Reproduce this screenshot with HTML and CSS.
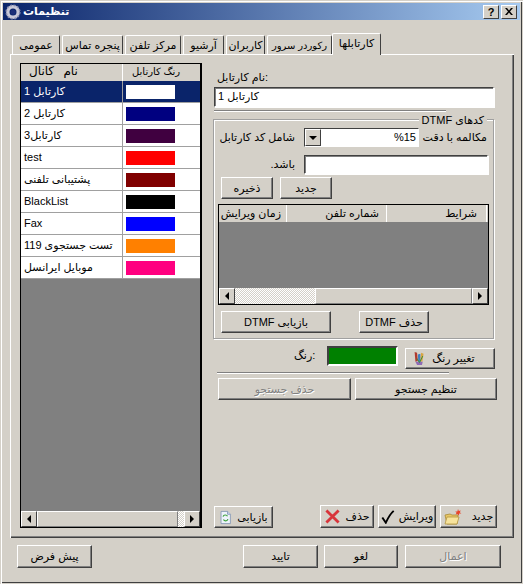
FILE: index.html
```html
<!DOCTYPE html>
<html lang="fa">
<head>
<meta charset="utf-8">
<title>تنظیمات</title>
<link rel="stylesheet" href="styles.css">
</head>
<body>
<div class="window">
  <div class="titlebar">
    <svg class="gear" viewBox="0 0 16 16" width="16" height="16"><circle cx="8" cy="8" r="5.2" fill="none" stroke="#c9c9d8" stroke-width="3.4"/><circle cx="8" cy="8" r="6.8" fill="none" stroke="#8a8fb0" stroke-width="1.6" stroke-dasharray="2 1.6"/><circle cx="8" cy="8" r="2.6" fill="#1c2f78"/></svg>
    <span class="title" dir="rtl">تنظیمات</span>
    <span class="capbtn help">?</span>
    <span class="capbtn close"><svg viewBox="0 0 8 7" width="8" height="7"><path d="M0 0h2l2 2.4L6 0h2L5 3.5 8 7H6L4 4.6 2 7H0l3-3.5z" fill="#000"/></svg></span>
  </div>

  <div class="tabs">
    <div class="tab t1" dir="rtl">عمومی</div>
    <div class="tab t2" dir="rtl">پنجره تماس</div>
    <div class="tab t3" dir="rtl">مرکز تلفن</div>
    <div class="tab t4" dir="rtl">آرشیو</div>
    <div class="tab t5" dir="rtl">کاربران</div>
    <div class="tab t6" dir="rtl">رکوردر سرور</div>
    <div class="tab active t7" dir="rtl">کارتابلها</div>
  </div>

  <div class="panel">
    <div class="list">
      <div class="list-head">
        <div class="lh-name" dir="rtl">نام کانال</div>
        <div class="lh-color" dir="rtl">رنگ کارتابل</div>
      </div>
      <div class="row selected"><div class="name" dir="rtl">کارتابل 1</div><div class="cell"><span class="sw c-white"></span></div></div>
      <div class="row"><div class="name" dir="rtl">کارتابل 2</div><div class="cell"><span class="sw c-navy"></span></div></div>
      <div class="row"><div class="name" dir="rtl">کارتابل3</div><div class="cell"><span class="sw c-purple"></span></div></div>
      <div class="row"><div class="name">test</div><div class="cell"><span class="sw c-red"></span></div></div>
      <div class="row"><div class="name" dir="rtl">پشتیبانی تلفنی</div><div class="cell"><span class="sw c-maroon"></span></div></div>
      <div class="row"><div class="name">BlackList</div><div class="cell"><span class="sw c-black"></span></div></div>
      <div class="row"><div class="name">Fax</div><div class="cell"><span class="sw c-blue"></span></div></div>
      <div class="row"><div class="name" dir="rtl">تست جستجوی 119</div><div class="cell"><span class="sw c-orange"></span></div></div>
      <div class="row"><div class="name" dir="rtl">موبایل ایرانسل</div><div class="cell"><span class="sw c-pink"></span></div></div>
      <div class="list-fill"></div>
      <div class="hscroll">
        <span class="sbtn"><i class="arrow left"></i></span>
        <span class="thumb wide"></span>
        <span class="track tiny"></span>
        <span class="sbtn"><i class="arrow right"></i></span>
      </div>
    </div>

    <div class="side">
      <div class="field-label">نام کارتابل:</div>
      <div class="input name-input" dir="rtl">کارتابل 1</div>
      <div class="rule first-rule"></div>

      <div class="group">
        <div class="legend" dir="rtl">کدهای DTMF</div>
        <div class="g-row r1">
          <span class="lbl l-code" dir="rtl">شامل کد کارتابل</span>
          <div class="combo">
            <span class="combo-btn"><i class="arrow down"></i></span>
            <span class="combo-val">%15</span>
          </div>
          <span class="lbl l-acc" dir="rtl">مکالمه با دقت</span>
        </div>
        <div class="g-row r2">
          <span class="lbl l-be" dir="rtl">باشد.</span>
          <div class="input be-input"></div>
        </div>
        <div class="g-row r3">
          <button class="btn b-save" dir="rtl">ذخیره</button>
          <button class="btn b-new" dir="rtl">جدید</button>
        </div>
        <div class="dtmf-table">
          <div class="dt-head">
            <div class="dh c1" dir="rtl">زمان ویرایش</div>
            <div class="dh c2" dir="rtl">شماره تلفن</div>
            <div class="dh c3" dir="rtl">شرایط</div>
          </div>
          <div class="dt-fill"></div>
          <div class="hscroll">
            <span class="sbtn"><i class="arrow left"></i></span>
            <span class="track med"></span>
            <span class="thumb grow"></span>
            <span class="sbtn"><i class="arrow right"></i></span>
          </div>
        </div>
        <div class="g-row r5">
          <button class="btn b-restore" dir="rtl">بازیابی DTMF</button>
          <button class="btn b-del" dir="rtl">حذف DTMF</button>
        </div>
      </div>

      <div class="color-row">
        <span class="lbl l-color">رنگ:</span>
        <span class="color-box"></span>
        <button class="btn b-color">
          <svg viewBox="0 0 16 18" width="13" height="17"><path d="M2 1l3 1 1 10-3 1z" fill="#b03a2e"/><path d="M6 4l3-1 .5 10-3 .5z" fill="#3c7fc0"/><path d="M10 2l3 1-1.5 10-2.5-.5z" fill="#d9a441"/><path d="M3 13h9l-1 4H5z" fill="#8e6bb5"/><path d="M5 9l3 5 4-8" fill="none" stroke="#3a8f3a" stroke-width="1.2"/></svg>
          <span dir="rtl">تغییر رنگ</span>
        </button>
      </div>
      <div class="rule second-rule"></div>
      <div class="search-row">
        <button class="btn b-sdel" disabled dir="rtl">حذف جستجو</button>
        <button class="btn b-sset" dir="rtl">تنظیم جستجو</button>
      </div>

      <div class="actions">
        <button class="btn b-reload">
          <svg viewBox="0 0 16 18" width="13" height="15"><path d="M2.5 1.5h8l3.5 3.5v11.500h-11.500z" fill="#eef3fb" stroke="#7f93b2"/><path d="M10.500 1.500v3.500h3.500" fill="#cfdcf0" stroke="#7f93b2"/><path d="M5 8a3 3 0 0 1 5.500-.5M11 11a3 3 0 0 1-5.500.5" fill="none" stroke="#3da23d" stroke-width="1.500"/></svg>
          <span dir="rtl">بازیابی</span>
        </button>
        <div class="act-spacer"></div>
        <button class="btn b-adel">
          <svg viewBox="0 0 16 16" width="15" height="15"><path d="M1.500 1.500l13 13M14.500 1.500l-13 13" stroke="#d8343a" stroke-width="3"/></svg>
          <span dir="rtl">حذف</span>
        </button>
        <button class="btn b-edit">
          <svg viewBox="0 0 16 16" width="14" height="14"><path d="M1.500 8.500l4 6C8 9 10.500 4.500 14.500 1" fill="none" stroke="#000" stroke-width="2.200"/></svg>
          <span dir="rtl">ویرایش</span>
        </button>
        <button class="btn b-anew">
          <svg viewBox="0 0 18 16" width="18" height="16"><path d="M1 6l5-1 2 1h6l-1 9H3z" fill="#e8c765" stroke="#a98a35" stroke-width=".8"/><path d="M1 15l2-7h12l-2 7z" fill="#f7e39c" stroke="#b3943f" stroke-width=".8"/><path d="M14 0l.8 2 2-.6-1 1.800 1.600 1.200-2.200.2-.4 2.200-1.200-1.800-2 .6 1-1.800-1.400-1.400 2.200 0z" fill="#e8442a"/></svg>
          <span dir="rtl">جدید</span>
        </button>
      </div>
    </div>
  </div>

  <div class="footer">
    <button class="btn f-default" dir="rtl">پیش فرض</button>
    <button class="btn f-ok" dir="rtl">تایید</button>
    <button class="btn f-cancel" dir="rtl">لغو</button>
    <button class="btn f-apply" disabled dir="rtl">اعمال</button>
  </div>
</div>
</body>
</html>
```
FILE: styles.css
```css
* { box-sizing: border-box; }
html, body { margin: 0; padding: 0; background: #d4d0c8; }
body, button { font-family: "Liberation Sans", "DejaVu Sans", sans-serif; font-size: 11px; color: #000; font-weight: normal; white-space: nowrap; }

.window {
  width: 523px; height: 584px; padding: 3px 0 0 0;
  background: #d4d0c8; overflow: hidden;
  box-shadow: inset 1px 1px 0 #d4d0c8, inset 2px 2px 0 #fff, inset -1px -1px 0 #d4d0c8, inset -2px -2px 0 #404040;
}

.titlebar {
  height: 17px; margin: 0 3px; padding: 0 3px 0 2px;
  display: flex; align-items: center;
  background: linear-gradient(90deg, #0a246a, #a6caf0);
}
.gear { flex: none; }
.title { margin-left: 2px; color: #fff; font-weight: bold; flex: 1; unicode-bidi: plaintext; text-align: left; }
.capbtn {
  width: 16px; height: 14px; margin-left: 2px; display: flex; align-items: center; justify-content: center;
  background: #d4d0c8; font-weight: bold; font-size: 11px;
  border: 1px solid; border-color: #fff #404040 #404040 #fff;
}

.tabs { display: flex; align-items: flex-end; height: 21px; margin: 13px 0 0 12px; gap: 2px; position: relative; z-index: 1; }
.tab {
  height: 19px; display: flex; align-items: center; justify-content: center;
  background: #d4d0c8; border: 1px solid; border-bottom: 0;
  border-color: #fff #404040 #fff #fff; border-radius: 2px 2px 0 0;
}
.tab.active { height: 22px; margin-bottom: -1px; padding-bottom: 2px; }
.t1 { width: 48px; } .t2 { width: 61px; } .t3 { width: 56px; } .t4 { width: 41px; }
.t5 { width: 39px; } .t6 { width: 65px; margin-right: -2px; font-size: 10px; } .t7 { width: 49px; }

.panel {
  width: 504px; height: 484px; margin-left: 10px; padding: 9px 0 10px 10px;
  display: flex;
  box-shadow: inset 1px 1px 0 #fff, inset -1px -1px 0 #404040, inset -2px -2px 0 #808080;
}

.list {
  width: 182px; height: 465px; display: flex; flex-direction: column; flex: none;
  background: #808080; border: 1px solid #000; border-width: 1px 2px 1px 1px;
}
.list-head { height: 17px; display: flex; background: #d4d0c8; flex: none; }
.lh-name { width: 102px; padding-left: 8px; text-align: left; line-height: 15px; border-right: 1px solid #fff; font-size: 12px; word-spacing: 6px; }
.lh-color { flex: 1; padding-left: 9px; text-align: left; line-height: 15px; font-size: 10px; }
.row { height: 22px; display: flex; background: #fff; border-bottom: 1px solid #a0a0a0; flex: none; }
.name { width: 102px; padding-left: 3px; text-align: left; line-height: 21px; border-right: 1px solid #a0a0a0; }
.cell { flex: 1; padding: 4px 0 0 3px; }
.sw { display: block; width: 49px; height: 14px; }
.row.selected { background: #0a246a; color: #fff; }
.c-white { background: #fff; } .c-navy { background: #000080; } .c-purple { background: #400040; }
.c-red { background: #f00; } .c-maroon { background: #800000; } .c-black { background: #000; }
.c-blue { background: #00f; } .c-orange { background: #ff8000; } .c-pink { background: #ff0080; }
.list-fill { flex: 1; }

.hscroll { height: 16px; display: flex; flex: none; background: #d4d0c8; }
.sbtn {
  width: 16px; height: 16px; display: flex; align-items: center; justify-content: center; flex: none;
  background: #d4d0c8; border: 1px solid; border-color: #fff #404040 #404040 #fff;
}
.thumb { background: #d4d0c8; border: 1px solid; border-color: #fff #808080 #808080 #fff; height: 16px; flex: 1; }
.track { height: 16px; background: repeating-conic-gradient(#fff 0 25%, #d4d0c8 0 50%) 0 0 / 2px 2px; }
.track.tiny { width: 6px; }
.track.med { width: 80px; }
.arrow { display: block; width: 0; height: 0; border: solid transparent; }
.arrow.left { border-width: 4px 4px 4px 0; border-right-color: #000; }
.arrow.right { border-width: 4px 0 4px 4px; border-left-color: #000; }
.arrow.down { border-width: 4px 4px 0 4px; border-top-color: #000; }

.side { width: 284px; margin-left: 11px; display: flex; flex-direction: column; flex: none; }
.field-label { height: 17px; margin: 7px 0 0 4px; text-align: left; line-height: 14px; }
.input {
  background: #fff; height: 20px; border: 1px solid; border-color: #404040 #fff #fff #404040;
  box-shadow: 1px 1px 0 #fff, inset 1px 1px 0 #808080;
  padding-left: 3px; line-height: 17px; text-align: left;
}
.name-input { width: 280px; margin-left: 1px; }
.rule { height: 2px; border-top: 1px solid #808080; border-bottom: 1px solid #fff; width: 232px; }
.first-rule { margin: 3px 0 0 1px; }

.group {
  width: 281px; height: 220px; margin-top: 7px; position: relative;
  border: 1px solid #a0a0a0; box-shadow: 1px 1px 0 #fff, inset 1px 1px 0 #fff;
}
.legend { position: absolute; top: -7px; right: 6px; padding: 0 3px; background: #d4d0c8; line-height: 14px; }
.g-row { display: flex; }
.lbl { line-height: 19px; white-space: nowrap; }
.r1 { margin: 8px 0 0 8px; height: 19px; }
.l-code { width: 73px; text-align: left; }
.combo {
  width: 115px; height: 19px; margin-left: 9px; display: flex; background: #fff; flex: none;
  border: 1px solid; border-color: #404040 #fff #fff #404040;
}
.combo-btn {
  width: 16px; display: flex; align-items: center; justify-content: center;
  background: #d4d0c8; border: 1px solid; border-color: #fff #404040 #404040 #fff;
}
.combo-val { flex: 1; text-align: right; padding-right: 2px; line-height: 17px; }
.l-acc { width: 61px; margin-left: 7px; text-align: left; }
.r2 { margin: 8px 0 0 0; height: 19px; }
.l-be { width: 81px; text-align: right; }
.be-input { width: 184px; height: 19px; margin-left: 9px; flex: none; }
.r3 { margin: 3px 0 0 7px; gap: 7px; }

.btn {
  height: 22px; padding: 0; margin: 0; display: flex; align-items: center; justify-content: center;
  background: #d4d0c8; border: 1px solid; border-color: #fff #404040 #404040 #fff;
  box-shadow: inset -1px -1px 0 #808080;
}
.btn:disabled { color: #808080; text-shadow: 1px 1px 0 #fff; }
.b-save { width: 52px; }
.b-new { width: 52px; }

.dtmf-table {
  width: 271px; height: 101px; margin: 5px 0 0 4px; display: flex; flex-direction: column;
  background: #808080; border: 1px solid #000;
}
.dt-head { height: 17px; display: flex; background: #d4d0c8; flex: none; }
.dh { text-align: right; padding-right: 7px; line-height: 16px; border-right: 1px solid #fff; }
.c1 { width: 68px; padding-right: 5px; } .c2 { width: 100px; } .c3 { width: 100px; padding-right: 9px; }
.dt-fill { flex: 1; }
.r5 { margin: 6px 0 0 7px; gap: 28px; }
.b-restore { width: 110px; }
.b-del { width: 70px; }

.color-row { display: flex; margin-top: 7px; height: 22px; align-items: flex-start; }
.l-color { width: 22px; margin-left: 81px; line-height: 18px; }
.color-box { width: 71px; height: 20px; margin-left: 11px; background: #008000; border: 2px solid; border-color: #404040 #fff #fff #404040; }
.b-color { width: 90px; height: 21px; margin: 2px 0 0 7px; gap: 6px; padding-right: 12px; }

.second-rule { margin: 4px 0 0 4px; }
.search-row { display: flex; margin: 4px 0 0 5px; gap: 4px; }
.b-sdel { width: 133px; }
.b-sset { width: 142px; }

.actions { margin-top: auto; display: flex; align-items: flex-end; }
.b-reload { width: 59px; margin-left: 1px; gap: 5px; }
.act-spacer { width: 47px; }
.b-adel { width: 54px; height: 23px; gap: 6px; }
.b-edit { width: 58px; height: 23px; margin-left: 4px; gap: 4px; }
.b-anew { width: 57px; height: 23px; margin-left: 4px; gap: 10px; }

.footer { display: flex; margin: 7px 0 0 17px; }
.footer .btn { height: 23px; }
.f-default { width: 75px; }
.f-ok { width: 75px; margin-left: 151px; }
.f-cancel { width: 74px; margin-left: 6px; }
.f-apply { width: 96px; margin-left: 7px; }
```
